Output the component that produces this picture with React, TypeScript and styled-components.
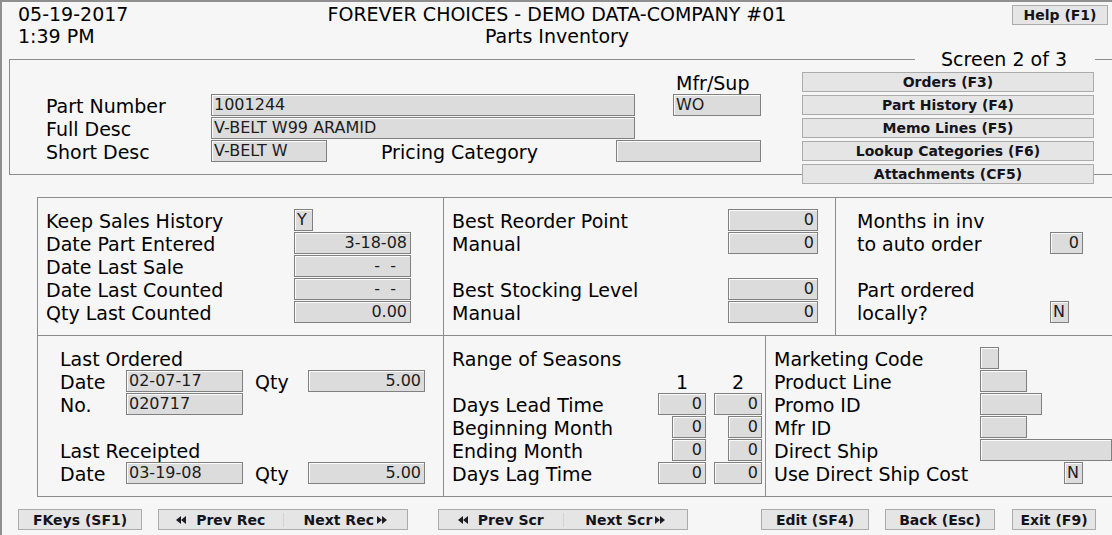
import React from "react";
import styled, { createGlobalStyle } from "styled-components";

const GlobalStyle = createGlobalStyle`
  html, body { margin: 0; padding: 0; background: #f6f6f6; }
  body { font-family: "DejaVu Sans", Verdana, sans-serif; color: #000; overflow: hidden; }
  * { box-sizing: border-box; }
`;

const Screen = styled.div`
  width: 1112px;
  height: 535px;
  border-top: 2px solid #8f8f8f;
  border-left: 2px solid #8f8f8f;
  display: flex;
  flex-direction: column;
  overflow: hidden;
  background: #f6f6f6;
`;

const Header = styled.header`
  display: grid;
  grid-template-columns: 1fr auto 1fr;
  height: 57px;
  padding-top: 1px;
  font-size: 19px;
  line-height: 22px;
`;

const DateBlock = styled.div`
  padding-left: 16px;
`;

const TitleBlock = styled.div`
  text-align: center;
`;

const KeyButton = styled.button<{ $w?: number; $h?: number; $ml?: number }>`
  flex: none;
  width: ${(p) => (p.$w ? `${p.$w}px` : "auto")};
  height: ${(p) => p.$h ?? 20}px;
  margin-left: ${(p) => p.$ml ?? 0}px;
  padding: 0;
  background: #e5e5e5;
  border: 1px solid #ababab;
  font-family: "DejaVu Sans", Verdana, sans-serif;
  font-weight: bold;
  font-size: 14px;
  line-height: 18px;
  color: #14141c;
  cursor: pointer;
`;

const HelpButton = styled(KeyButton)`
  justify-self: end;
  align-self: start;
  margin: 2px 4px 0 0;
`;

const TopPanel = styled.section`
  position: relative;
  height: 116px;
  margin-left: 7px;
  border: 1px solid #8c8c8c;
  border-right: none;
  padding: 11px 0 0 36px;
  display: flex;
  align-items: flex-start;
`;

const Legend = styled.div`
  position: absolute;
  top: -12px;
  right: 17px;
  padding: 0 28px 0 26px;
  background: #f6f6f6;
  font-size: 19px;
  line-height: 22px;
`;

const Form = styled.div`
  display: flex;
  flex-direction: column;
  width: 715px;
  flex: none;
`;

const Row = styled.div`
  display: flex;
  align-items: flex-start;
  height: 23px;
`;

const Label = styled.span<{ $w?: number; $ml?: number }>`
  flex: none;
  width: ${(p) => (p.$w ? `${p.$w}px` : "auto")};
  margin-left: ${(p) => p.$ml ?? 0}px;
  font-size: 19px;
  line-height: 24px;
  white-space: nowrap;
`;

const Field = styled.div<{ $w: number; $right?: boolean; $pr?: number }>`
  flex: none;
  width: ${(p) => p.$w}px;
  height: 22px;
  background: #dcdcdc;
  border: 1px solid #808080;
  box-shadow: inset 1px 1px 0 #fbfbfb;
  font-size: 16px;
  line-height: 20px;
  padding: 0 ${(p) => p.$pr ?? 3}px 0 2px;
  text-align: ${(p) => (p.$right ? "right" : "left")};
  white-space: pre;
  overflow: hidden;
  color: #1c1c1c;
`;

const SideButtons = styled.div`
  display: flex;
  flex-direction: column;
  gap: 3px;
  width: 292px;
  margin: 1px 0 0 41px;
  flex: none;
`;

const MidBox = styled.section`
  margin: 22px 0 0 35px;
  border: 1px solid #8c8c8c;
  border-right: none;
`;

const SectionRow = styled.div<{ $cols: string }>`
  display: grid;
  grid-template-columns: ${(p) => p.$cols};
  & + & {
    border-top: 1px solid #8c8c8c;
  }
`;

const Cell = styled.div<{ $pl: number }>`
  display: flex;
  flex-direction: column;
  padding: 11px 0 11px ${(p) => p.$pl}px;
  & + & {
    border-left: 1px solid #8c8c8c;
  }
`;

const SeasonPair = styled.div`
  display: grid;
  grid-template-columns: 48px 48px;
  column-gap: 8px;
  justify-items: end;
`;

const ColHead = styled.span`
  justify-self: stretch;
  text-align: center;
  font-size: 19px;
  line-height: 24px;
`;

const BottomBar = styled.footer`
  display: flex;
  align-items: flex-start;
  margin-top: 12px;
  padding-left: 16px;
`;

const Split = styled.div<{ $ml: number }>`
  flex: none;
  display: flex;
  align-items: center;
  width: 250px;
  height: 21px;
  margin-left: ${(p) => p.$ml}px;
  background: #e5e5e5;
  border: 1px solid #ababab;
`;

const SplitHalf = styled.button`
  flex: 1;
  height: 100%;
  display: flex;
  align-items: center;
  justify-content: center;
  gap: 10px;
  padding: 0;
  background: transparent;
  border: none;
  font-family: "DejaVu Sans", Verdana, sans-serif;
  font-weight: bold;
  font-size: 14px;
  color: #14141c;
  cursor: pointer;
`;

const NextHalf = styled(SplitHalf)`
  gap: 3px;
`;

const Separator = styled.span`
  flex: none;
  width: 1px;
  height: 14px;
  background: #d2d2d2;
`;

const ArrowSvg = styled.svg`
  flex: none;
  fill: #1c1c24;
`;

const Arrows = ({ dir }: { dir: "left" | "right" }) => (
  <ArrowSvg width="10" height="8" viewBox="0 0 10 8">
    {dir === "left" ? (
      <>
        <polygon points="5,0 5,8 0,4" />
        <polygon points="10,0 10,8 5,4" />
      </>
    ) : (
      <>
        <polygon points="0,0 5,4 0,8" />
        <polygon points="5,0 10,4 5,8" />
      </>
    )}
  </ArrowSvg>
);

const SplitNav = ({ ml, prev, next }: { ml: number; prev: string; next: string }) => (
  <Split $ml={ml}>
    <SplitHalf>
      <Arrows dir="left" />
      <span>{prev}</span>
    </SplitHalf>
    <Separator />
    <NextHalf>
      <span>{next}</span>
      <Arrows dir="right" />
    </NextHalf>
  </Split>
);

export default function App() {
  return (
    <>
      <GlobalStyle />
      <Screen>
        <Header>
          <DateBlock>
            <div>05-19-2017</div>
            <div>1:39 PM</div>
          </DateBlock>
          <TitleBlock>
            <div>FOREVER CHOICES - DEMO DATA-COMPANY #01</div>
            <div>Parts Inventory</div>
          </TitleBlock>
          <HelpButton $w={96}>Help (F1)</HelpButton>
        </Header>

        <TopPanel>
          <Legend>Screen 2 of 3</Legend>
          <Form>
            <Row>
              <Label $ml={630}>Mfr/Sup</Label>
            </Row>
            <Row>
              <Label $w={165}>Part Number</Label>
              <Field $w={424}>1001244</Field>
              <Label $w={38} />
              <Field $w={88}>WO</Field>
            </Row>
            <Row>
              <Label $w={165}>Full Desc</Label>
              <Field $w={424}>V-BELT W99 ARAMID</Field>
            </Row>
            <Row>
              <Label $w={165}>Short Desc</Label>
              <Field $w={116}>V-BELT W</Field>
              <Label $w={235} $ml={54}>Pricing Category</Label>
              <Field $w={145} />
            </Row>
          </Form>
          <SideButtons>
            <KeyButton>Orders (F3)</KeyButton>
            <KeyButton>Part History (F4)</KeyButton>
            <KeyButton>Memo Lines (F5)</KeyButton>
            <KeyButton>Lookup Categories (F6)</KeyButton>
            <KeyButton>Attachments (CF5)</KeyButton>
          </SideButtons>
        </TopPanel>

        <MidBox>
          <SectionRow $cols="405px 392px 1fr">
            <Cell $pl={8}>
              <Row>
                <Label $w={248}>Keep Sales History</Label>
                <Field $w={19}>Y</Field>
              </Row>
              <Row>
                <Label $w={248}>Date Part Entered</Label>
                <Field $w={117} $right>3-18-08</Field>
              </Row>
              <Row>
                <Label $w={248}>Date Last Sale</Label>
                <Field $w={117} $right $pr={14}>{"-  -"}</Field>
              </Row>
              <Row>
                <Label $w={248}>Date Last Counted</Label>
                <Field $w={117} $right $pr={14}>{"-  -"}</Field>
              </Row>
              <Row>
                <Label $w={248}>Qty Last Counted</Label>
                <Field $w={117} $right>0.00</Field>
              </Row>
            </Cell>
            <Cell $pl={8}>
              <Row>
                <Label $w={276}>Best Reorder Point</Label>
                <Field $w={90} $right>0</Field>
              </Row>
              <Row>
                <Label $w={276}>Manual</Label>
                <Field $w={90} $right>0</Field>
              </Row>
              <Row />
              <Row>
                <Label $w={276}>Best Stocking Level</Label>
                <Field $w={90} $right>0</Field>
              </Row>
              <Row>
                <Label $w={276}>Manual</Label>
                <Field $w={90} $right>0</Field>
              </Row>
            </Cell>
            <Cell $pl={21}>
              <Row>
                <Label>Months in inv</Label>
              </Row>
              <Row>
                <Label $w={193}>to auto order</Label>
                <Field $w={33} $right>0</Field>
              </Row>
              <Row />
              <Row>
                <Label>Part ordered</Label>
              </Row>
              <Row>
                <Label $w={193}>locally?</Label>
                <Field $w={19}>N</Field>
              </Row>
            </Cell>
          </SectionRow>

          <SectionRow $cols="405px 322px 1fr">
            <Cell $pl={22}>
              <Row>
                <Label>Last Ordered</Label>
              </Row>
              <Row>
                <Label $w={66}>Date</Label>
                <Field $w={117}>02-07-17</Field>
                <Label $w={53} $ml={12}>Qty</Label>
                <Field $w={117} $right>5.00</Field>
              </Row>
              <Row>
                <Label $w={66}>No.</Label>
                <Field $w={117}>020717</Field>
              </Row>
              <Row />
              <Row>
                <Label>Last Receipted</Label>
              </Row>
              <Row>
                <Label $w={66}>Date</Label>
                <Field $w={117}>03-19-08</Field>
                <Label $w={53} $ml={12}>Qty</Label>
                <Field $w={117} $right>5.00</Field>
              </Row>
            </Cell>
            <Cell $pl={8}>
              <Row>
                <Label>Range of Seasons</Label>
              </Row>
              <Row>
                <Label $w={206} />
                <SeasonPair>
                  <ColHead>1</ColHead>
                  <ColHead>2</ColHead>
                </SeasonPair>
              </Row>
              <Row>
                <Label $w={206}>Days Lead Time</Label>
                <SeasonPair>
                  <Field $w={48} $right>0</Field>
                  <Field $w={48} $right>0</Field>
                </SeasonPair>
              </Row>
              <Row>
                <Label $w={206}>Beginning Month</Label>
                <SeasonPair>
                  <Field $w={34} $right>0</Field>
                  <Field $w={34} $right>0</Field>
                </SeasonPair>
              </Row>
              <Row>
                <Label $w={206}>Ending Month</Label>
                <SeasonPair>
                  <Field $w={34} $right>0</Field>
                  <Field $w={34} $right>0</Field>
                </SeasonPair>
              </Row>
              <Row>
                <Label $w={206}>Days Lag Time</Label>
                <SeasonPair>
                  <Field $w={48} $right>0</Field>
                  <Field $w={48} $right>0</Field>
                </SeasonPair>
              </Row>
            </Cell>
            <Cell $pl={8}>
              <Row>
                <Label $w={206}>Marketing Code</Label>
                <Field $w={19} />
              </Row>
              <Row>
                <Label $w={206}>Product Line</Label>
                <Field $w={47} />
              </Row>
              <Row>
                <Label $w={206}>Promo ID</Label>
                <Field $w={62} />
              </Row>
              <Row>
                <Label $w={206}>Mfr ID</Label>
                <Field $w={47} />
              </Row>
              <Row>
                <Label $w={206}>Direct Ship</Label>
                <Field $w={132} />
              </Row>
              <Row>
                <Label $w={290}>Use Direct Ship Cost</Label>
                <Field $w={19}>N</Field>
              </Row>
            </Cell>
          </SectionRow>
        </MidBox>

        <BottomBar>
          <KeyButton $w={124} $h={21}>FKeys (SF1)</KeyButton>
          <SplitNav ml={16} prev="Prev Rec" next="Next Rec" />
          <SplitNav ml={30} prev="Prev Scr" next="Next Scr" />
          <KeyButton $w={108} $h={21} $ml={73}>Edit (SF4)</KeyButton>
          <KeyButton $w={110} $h={21} $ml={16}>Back (Esc)</KeyButton>
          <KeyButton $w={84} $h={21} $ml={17}>Exit (F9)</KeyButton>
        </BottomBar>
      </Screen>
    </>
  );
}
